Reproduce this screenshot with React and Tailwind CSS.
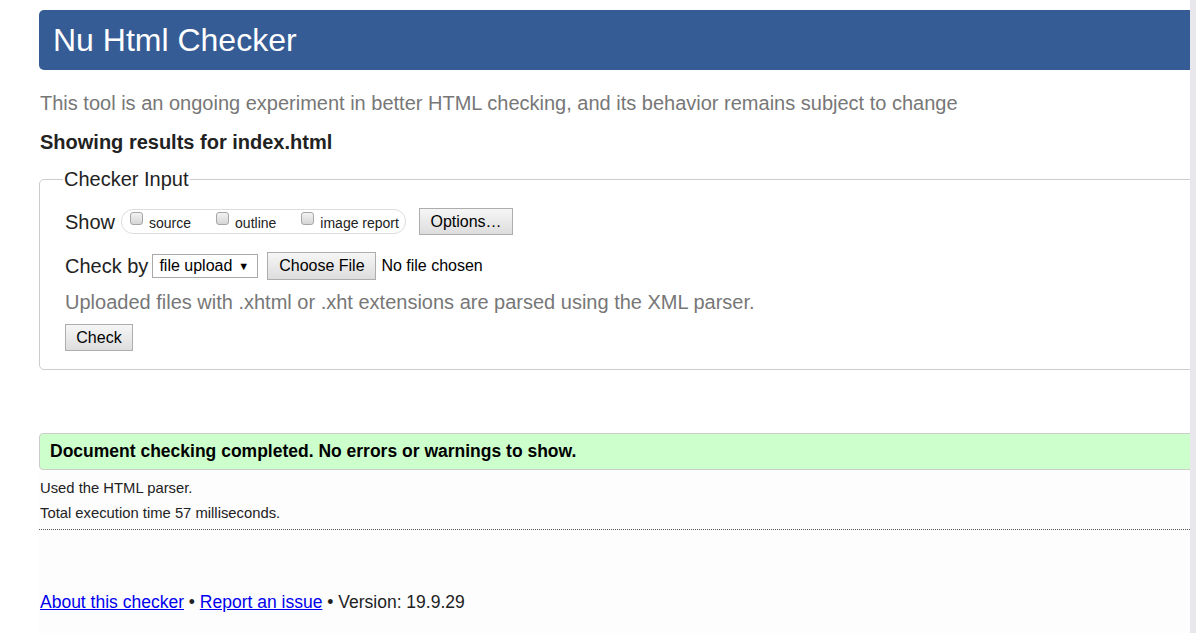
import React from 'react'

const font = { fontFamily: '"Liberation Sans", Arial, sans-serif' }

function Box({ label }) {
  return (
    <label className="flex items-start gap-[6px]">
      <span className="mt-[1px] block h-[13px] w-[13px] rounded-[3px] border border-[#a6a6a6] bg-gradient-to-b from-[#f2f2f2] to-[#d6d6d6]" />
      <span className="mt-[4px] text-[14px] leading-[16px] text-[#222]">{label}</span>
    </label>
  )
}

function Btn({ children, className = '' }) {
  return (
    <button
      className={`border border-[#adadad] bg-gradient-to-b from-[#f6f6f6] to-[#dddddd] text-[16px] leading-[18px] text-black ${className}`}
    >
      {children}
    </button>
  )
}

export default function App() {
  return (
    <div className="flex h-[633px] w-[1196px] overflow-hidden bg-white" style={font}>
      <div className="w-[1190px] overflow-hidden">
        <div className="w-[1260px] pl-[39px] pt-[10px]">
          {/* header */}
          <div className="flex h-[60px] items-center rounded-[5px] bg-[#365c95] pl-[14px]">
            <h1 className="text-[32px] leading-[36px] text-white">Nu Html Checker</h1>
          </div>

          <p className="mt-[22px] pl-[1px] text-[20px] leading-[22px] text-[#777]">
            This tool is an ongoing experiment in better HTML checking, and its behavior remains subject to change
          </p>

          <h2 className="mt-[17px] pl-[1px] text-[20px] font-bold leading-[22px] text-[#222]">
            Showing results for index.html
          </h2>

          {/* fieldset */}
          <fieldset className="mt-[15px] h-[202px] rounded-[5px] border border-[#cccccc] pl-[25px] pr-0">
            <legend className="px-[1px] text-[20px] leading-[22px] text-[#222]" style={{ marginLeft: -2 }}>
              Checker Input
            </legend>

            <div className="mt-[18px] flex items-center">
              <span className="text-[20px] leading-[24px] text-[#222]">Show</span>
              <div className="ml-[6px] flex h-[25px] w-[285px] items-start gap-[25px] rounded-[12px] border border-[#dddddd] pl-[8px] pt-[1px]">
                <Box label="source" />
                <Box label="outline" />
                <Box label="image report" />
              </div>
              <Btn className="ml-[13px] h-[27px] w-[94px]">Options…</Btn>
            </div>

            <div className="mt-[17px] flex items-center">
              <span className="text-[20px] leading-[24px] text-[#222]">Check by</span>
              <div className="ml-[4px] flex h-[24px] w-[106px] items-center border border-[#a9a9a9] bg-white pl-[6px] text-[16px] text-black">
                file upload
                <span className="ml-[6px] text-[11px]">▼</span>
              </div>
              <Btn className="ml-[9px] h-[28px] w-[109px]">Choose File</Btn>
              <span className="ml-[5px] text-[16px] text-black">No file chosen</span>
            </div>

            <p className="mt-[10px] text-[20px] leading-[24px] text-[#777]">
              Uploaded files with .xhtml or .xht extensions are parsed using the XML parser.
            </p>

            <Btn className="ml-0 mt-[10px] h-[27px] w-[68px]">Check</Btn>
          </fieldset>

          {/* result */}
          <div className="mt-[63px] flex h-[37px] items-center rounded-[4px] border border-[#cccccc] bg-[#ccffcc] pl-[10px]">
            <span className="text-[17.5px] font-bold text-black">
              Document checking completed. No errors or warnings to show.
            </span>
          </div>

          <div className="bg-[#fdfdfd] pb-[80px]">
            <p className="pl-[1px] pt-[10px] text-[14.8px] leading-[16px] text-[#222]">Used the HTML parser.</p>
            <p className="mt-[9px] pl-[1px] text-[14.8px] leading-[16px] text-[#222]">
              Total execution time 57 milliseconds.
            </p>
            <div className="mt-[8px] border-b border-dotted border-[#555]" />

            <p className="mt-[62px] pl-[1px] text-[17.5px] leading-[20px] text-[#222]">
              <a href="#" className="text-[#0000ee] underline">About this checker</a>
              {' • '}
              <a href="#" className="text-[#0000ee] underline">Report an issue</a>
              {' • Version: 19.9.29'}
            </p>
          </div>
        </div>
      </div>
      <div className="w-[6px] bg-[#e7e7ec]" />
    </div>
  )
}
